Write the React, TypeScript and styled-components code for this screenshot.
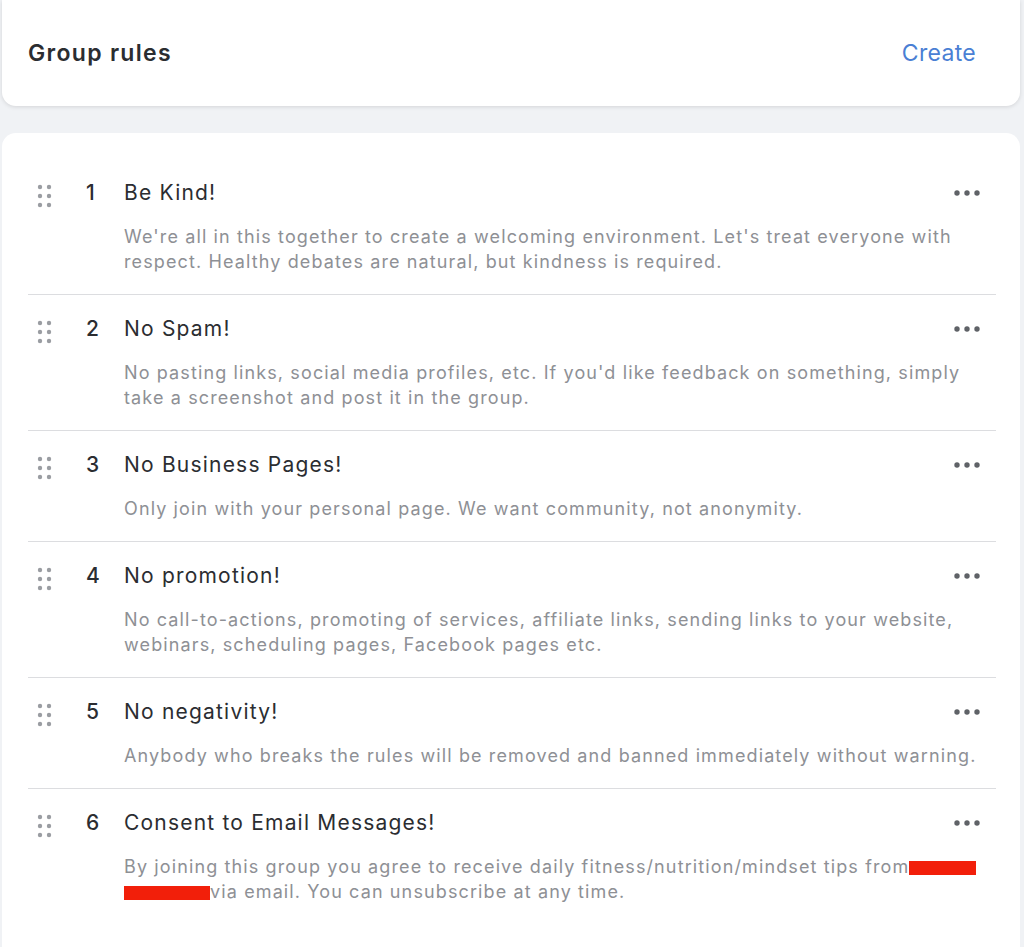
import React from 'react';
import styled, { createGlobalStyle } from 'styled-components';

const GlobalStyle = createGlobalStyle`
  html, body {
    margin: 0;
    padding: 0;
    background: #f0f2f5;
    font-family: Inter, "Liberation Sans", Arial, sans-serif;
  }
`;

// the red bars that hide a name in the last rule
const Redacted = styled.span<{ $w: number }>`
  display: inline-block;
  width: ${p => p.$w}px;
  height: 14px;
  background: #f21f0a;
  vertical-align: middle;
`;

type Rule = {
  title: string;
  body: React.ReactNode;
};

const rules: Rule[] = [
  {
    title: 'Be Kind!',
    body: "We're all in this together to create a welcoming environment. Let's treat everyone with respect. Healthy debates are natural, but kindness is required.",
  },
  {
    title: 'No Spam!',
    body: "No pasting links, social media profiles, etc. If you'd like feedback on something, simply take a screenshot and post it in the group.",
  },
  {
    title: 'No Business Pages!',
    body: 'Only join with your personal page. We want community, not anonymity.',
  },
  {
    title: 'No promotion!',
    body: 'No call-to-actions, promoting of services, affiliate links, sending links to your website, webinars, scheduling pages, Facebook pages etc.',
  },
  {
    title: 'No negativity!',
    body: 'Anybody who breaks the rules will be removed and banned immediately without warning.',
  },
  {
    title: 'Consent to Email Messages!',
    body: (
      <>
        By joining this group you agree to receive daily fitness/nutrition/mindset tips from
        <Redacted $w={67} /> <Redacted $w={86} />via email. You can unsubscribe at any time.
      </>
    ),
  },
];

function DragHandle() {
  return (
    <svg width="16" height="24" viewBox="0 0 16 24">
      {[3, 12, 21].map(y => (
        <g key={y} fill="#9a9da2">
          <circle cx="3" cy={y} r="2.2" />
          <circle cx="12" cy={y} r="2.2" />
        </g>
      ))}
    </svg>
  );
}

function MoreDots() {
  return (
    <svg width="26" height="6" viewBox="0 0 26 6">
      <g fill="#5f6267">
        <circle cx="3" cy="3" r="2.7" />
        <circle cx="13" cy="3" r="2.7" />
        <circle cx="23" cy="3" r="2.7" />
      </g>
    </svg>
  );
}

function App() {
  return (
    <Page>
      <GlobalStyle />
      <HeaderCard>
        <Heading>Group rules</Heading>
        <CreateLink href="#">Create</CreateLink>
      </HeaderCard>
      <RulesCard>
        {rules.map((rule, i) => (
          <RuleRow key={rule.title} $last={i === rules.length - 1}>
            <Handle>
              <DragHandle />
            </Handle>
            <Num>{i + 1}</Num>
            <RuleContent>
              <TitleLine>
                <RuleTitle>{rule.title}</RuleTitle>
                <More>
                  <MoreDots />
                </More>
              </TitleLine>
              <RuleText>{rule.body}</RuleText>
            </RuleContent>
          </RuleRow>
        ))}
      </RulesCard>
    </Page>
  );
}

export default App;

const Page = styled.div`
  height: 947px;
  overflow: hidden;
  padding: 0 4px 0 2px;
  display: flex;
  flex-direction: column;
  gap: 27px;
`;

const HeaderCard = styled.div`
  height: 106px;
  flex-shrink: 0;
  background: #fff;
  border-radius: 0 0 14px 14px;
  box-shadow: 0 1px 4px rgba(0, 0, 0, 0.12);
  display: flex;
  align-items: center;
  justify-content: space-between;
  padding: 0 44px 0 26px;
  box-sizing: border-box;
`;

const Heading = styled.h1`
  margin: 0;
  font-size: 23px;
  font-weight: 600;
  color: #2b2d31;
  letter-spacing: 1.3px;
`;

const CreateLink = styled.a`
  font-size: 23px;
  color: #4a7fd4;
  text-decoration: none;
  letter-spacing: 0.3px;
`;

const RulesCard = styled.div`
  background: #fff;
  border-radius: 14px 14px 0 0;
  padding: 26px 24px 0 26px;
  flex: 1;
`;

const RuleRow = styled.div<{ $last?: boolean }>`
  display: flex;
  align-items: flex-start;
  padding: 22px 0 20px;
  border-bottom: ${p => (p.$last ? 'none' : '1.5px solid #dcdde0')};
`;

const Handle = styled.div`
  width: 16px;
  padding: 3px 0 0 9px;
  flex-shrink: 0;
`;

const Num = styled.div`
  width: 71px;
  padding-left: 33px;
  box-sizing: border-box;
  font-size: 21px;
  font-weight: 500;
  color: #2b2d31;
  line-height: 24px;
  flex-shrink: 0;
`;

const RuleContent = styled.div`
  flex: 1;
  display: flex;
  flex-direction: column;
  gap: 19px;
`;

const TitleLine = styled.div`
  display: flex;
  align-items: center;
  justify-content: space-between;
  padding-right: 16px;
`;

const RuleTitle = styled.div`
  font-size: 21px;
  line-height: 24px;
  color: #2b2d31;
  letter-spacing: 1.2px;
`;

const RuleText = styled.div`
  font-size: 18px;
  line-height: 25px;
  color: #8e9095;
  letter-spacing: 1.12px;
  max-width: 870px;
`;

const More = styled.div`
  display: flex;
`;
